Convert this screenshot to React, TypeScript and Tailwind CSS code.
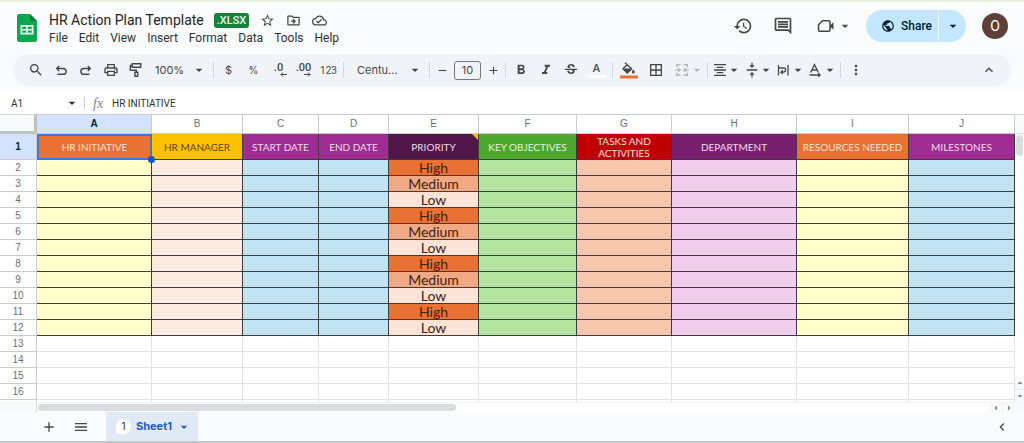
import { useState } from 'react'
import type { ReactNode } from 'react'
import {
  MdAdd,
  MdArrowDropDown,
  MdBorderAll,
  MdChevronLeft,
  MdExpandLess,
  MdFormatAlignCenter,
  MdFormatBold,
  MdFormatItalic,
  MdHistory,
  MdMenu,
  MdMoreVert,
  MdOutlineCloudDone,
  MdOutlineComment,
  MdOutlineDriveFileMove,
  MdOutlinePrint,
  MdPublic,
  MdRemove,
  MdSearch,
  MdStarBorder,
  MdStrikethroughS,
  MdVerticalAlignCenter
} from 'react-icons/md'

interface Column {
  letter: string
  width: string
  title: string
  head: string
  fill: string
}

const columns: Column[] = [
  { letter: 'A', width: 'w-[115px]', title: 'HR INITIATIVE', head: 'bg-[#e97132] text-[#fbe3d6]', fill: 'bg-[#ffffcc]' },
  { letter: 'B', width: 'w-[91px]', title: 'HR MANAGER', head: 'bg-[#ffc000] text-[#5c4708]', fill: 'bg-[#fbebe2]' },
  { letter: 'C', width: 'w-[76px]', title: 'START DATE', head: 'bg-[#a02b93] text-[#f3dcf0]', fill: 'bg-[#c0e4f4]' },
  { letter: 'D', width: 'w-[70px]', title: 'END DATE', head: 'bg-[#a02b93] text-[#f3dcf0]', fill: 'bg-[#c0e4f4]' },
  { letter: 'E', width: 'w-[90px]', title: 'PRIORITY', head: 'bg-[#501549] text-[#f3dcf0]', fill: '' },
  { letter: 'F', width: 'w-[98px]', title: 'KEY OBJECTIVES', head: 'bg-[#4ea72e] text-[#e3f5dc]', fill: 'bg-[#b3e5a1]' },
  { letter: 'G', width: 'w-[95px]', title: 'TASKS AND ACTIVITIES', head: 'bg-[#c00000] text-[#fbe0e0]', fill: 'bg-[#f6c6ad]' },
  { letter: 'H', width: 'w-[125px]', title: 'DEPARTMENT', head: 'bg-[#78206e] text-[#f3dcf0]', fill: 'bg-[#f1ceee]' },
  { letter: 'I', width: 'w-[112px]', title: 'RESOURCES NEEDED', head: 'bg-[#e97132] text-[#fbe3d6]', fill: 'bg-[#ffffcc]' },
  { letter: 'J', width: 'w-auto', title: 'MILESTONES', head: 'bg-[#a02b93] text-[#f3dcf0]', fill: 'bg-[#c0e4f4]' }
]

const priorities = ['High', 'Medium', 'Low', 'High', 'Medium', 'Low', 'High', 'Medium', 'Low', 'High', 'Low']

const priorityFill: Record<string, string> = {
  High: 'bg-[#e97132]',
  Medium: 'bg-[#f1a983]',
  Low: 'bg-[#fbe3d6]'
}

const emptyRows = [13, 14, 15, 16, 17]

const menus = ['File', 'Edit', 'View', 'Insert', 'Format', 'Data', 'Tools', 'Help']

function ToolButton({ label, wide, children }: { label: string; wide?: boolean; children: ReactNode }) {
  return (
    <button
      aria-label={label}
      className={`flex h-6 shrink-0 items-center justify-center rounded hover:bg-gray-200 ${wide ? 'w-[27px]' : 'w-[25px]'}`}
    >
      {children}
    </button>
  )
}

function DropButton({ label, disabled, children }: { label: string; disabled?: boolean; children: ReactNode }) {
  return (
    <button
      aria-label={label}
      disabled={disabled}
      className="flex h-6 w-8 shrink-0 items-center justify-between rounded pl-[2px] hover:bg-gray-200 disabled:w-9 disabled:pl-[6px] disabled:text-[#b4b8bc]"
    >
      {children}
      <MdArrowDropDown className="-ml-1 h-4 w-4 shrink-0" />
    </button>
  )
}

function Separator() {
  return <div className="mx-[2px] h-4 w-px shrink-0 bg-[#d3d7dc]" />
}

function SheetsLogo() {
  return (
    <svg viewBox="0 0 20 28" className="h-7 w-5 shrink-0">
      <path d="M2 0h11l7 7v19a2 2 0 0 1-2 2H2a2 2 0 0 1-2-2V2a2 2 0 0 1 2-2z" fill="#0aa84f" />
      <path d="M13 0l7 7h-5.500a1.500 1.500 0 0 1-1.500-1.500z" fill="#087a3b" />
      <path d="M3.500 11h13v9.500h-13zM5.200 12.700v2.200h3.900v-2.200zm5.700 0v2.200h3.900v-2.200zm-5.700 3.900v2.200h3.900v-2.200zm5.700 0v2.200h3.900v-2.200z" fill="#e6f7ec" fillRule="evenodd" />
    </svg>
  )
}

function MeetIcon() {
  return (
    <svg viewBox="0 0 18 16" className="h-4 w-[18px]">
      <path d="M5.500 2.700h6.300a1.200 1.200 0 0 1 1.200 1.200v8.200a1.200 1.200 0 0 1-1.200 1.200H2.700a1.200 1.200 0 0 1-1.200-1.200V6.700z" fill="none" stroke="currentColor" strokeWidth="1.500" strokeLinejoin="round" />
      <path d="M13.200 7.200l3.300-3v7.600l-3.300-3z" fill="currentColor" />
    </svg>
  )
}

function UndoIcon({ flip }: { flip?: boolean }) {
  return (
    <svg viewBox="0 0 14 14" className={flip ? 'h-[14px] w-[14px] -scale-x-100' : 'h-[14px] w-[14px]'} fill="none" stroke="currentColor" strokeWidth="1.400">
      <path d="M5.200 3L2.700 5.500 5.200 8M2.900 5.500h6.300a2.900 2.900 0 0 1 0 5.800H3.500" />
    </svg>
  )
}

function PaintRollerIcon() {
  return (
    <svg viewBox="0 0 14 16" className="h-4 w-[14px]" fill="none" stroke="currentColor" strokeWidth="1.400">
      <path d="M3.200 1.700h8.600v3.600H3.200zM3.200 3.500H1.300v4.800h6v2" />
      <path d="M5.900 10.300h2.800v4H5.900z" />
    </svg>
  )
}

function FillIcon() {
  return (
    <svg viewBox="0 0 18 17" className="h-[17px] w-[18px]">
      <path d="M5 .8l6.700 5.900-4.400 4.400L3 6.800l4.200-4.100" fill="none" stroke="currentColor" strokeWidth="1.400" strokeLinejoin="round" />
      <path d="M3 6.400h8.500l-4.200 4.700z" fill="currentColor" />
      <path d="M13.300 7.400s1.500 1.600 1.500 2.500a1.500 1.500 0 0 1-3 0c0-.9 1.500-2.500 1.500-2.500z" fill="currentColor" />
      <path d="M0 13.500h18v3H0z" fill="#e97132" />
    </svg>
  )
}

function MergeIcon() {
  return (
    <svg viewBox="0 0 14 14" className="h-[14px] w-[14px]" fill="none" stroke="currentColor" strokeWidth="1.400">
      <path d="M5.500 1.700H1.700v2.600M8.500 1.700h3.800v2.600M5.500 12.300H1.700V9.700M8.500 12.300h3.800V9.700M.5 7h4.200M13.500 7H9.300M3.300 5.200L5.100 7 3.300 8.800M10.700 5.200L8.900 7l1.800 1.800" />
    </svg>
  )
}

function WrapIcon() {
  return (
    <svg viewBox="0 0 14 14" className="h-[14px] w-[14px]" fill="none" stroke="currentColor" strokeWidth="1.300">
      <path d="M2.500 2v10.500M12 2v10.500M2.500 5h5a2.100 2.100 0 0 1 0 4.200H5M6.800 7.300L4.900 9.200l1.900 1.900" />
    </svg>
  )
}

function RotateIcon() {
  return (
    <svg viewBox="0 0 14 14" className="h-[14px] w-[14px]" fill="none" stroke="currentColor" strokeWidth="1.300">
      <path d="M2.700 9.500L6.500 1.500l3.800 8M4 7h5M1.500 12h10.500M10.300 10.200l1.800 1.800-1.800 1.800" />
    </svg>
  )
}

function DecimalIcon({ digits, increase }: { digits: string; increase?: boolean }) {
  return (
    <span className="flex flex-col items-end font-['Roboto',sans-serif] text-[11px] leading-[9px] font-medium">
      {digits}
      <svg viewBox="0 0 7 5" className={increase ? 'h-[5px] w-[7px] -scale-x-100' : '-mr-1 h-[5px] w-[7px]'} fill="none" stroke="currentColor">
        <path d="M7 2.500H1M3 .5l-2 2 2 2" />
      </svg>
    </span>
  )
}

function Header() {
  return (
    <header className="flex h-[52px] items-start pl-[17px] pr-4 font-['Google_Sans',Roboto,sans-serif]">
      <div className="pt-3">
        <SheetsLogo />
      </div>
      <div className="ml-3 pt-2">
        <div className="flex h-5 items-center text-[#444746]">
          <h1 className="text-[14px] leading-5 text-[#1f1f1f]">HR Action Plan Template</h1>
          <span className="ml-[10px] rounded-[3px] bg-[#188038] px-[3px] text-[11px] leading-[15px] font-medium text-[#e6f4ea]">.XLSX</span>
          <button aria-label="Star" className="ml-[11px]"><MdStarBorder className="h-[15px] w-[15px]" /></button>
          <button aria-label="Move" className="ml-[11px]"><MdOutlineDriveFileMove className="h-[15px] w-[15px]" /></button>
          <button aria-label="Document status" className="ml-[11px]"><MdOutlineCloudDone className="h-[15px] w-[15px]" /></button>
        </div>
        <nav className="flex gap-[11px] text-[12px] leading-4 text-[#303134]">
          {menus.map((menu) => (
            <button key={menu} className="hover:bg-gray-200">{menu}</button>
          ))}
        </nav>
      </div>
      <div className="ml-auto flex items-center pt-2 text-[#444746]">
        <button aria-label="Version history"><MdHistory className="h-5 w-5" /></button>
        <button aria-label="Comments" className="ml-5"><MdOutlineComment className="h-5 w-5" /></button>
        <button aria-label="Meet" className="ml-6 flex items-center">
          <MeetIcon />
          <MdArrowDropDown className="ml-[2px] h-4 w-4" />
        </button>
        <div className="ml-[13px] flex h-8 overflow-hidden rounded-full bg-[#c2e7ff] text-[#001d35]">
          <button className="flex w-[72px] items-center gap-[6px] pl-[15px] text-[12px] font-medium">
            <MdPublic className="h-[14px] w-[14px] shrink-0" />
            Share
          </button>
          <button aria-label="Share options" className="flex w-7 items-center justify-center border-l border-[#e8f5fe]">
            <MdArrowDropDown className="h-4 w-4" />
          </button>
        </div>
        <button aria-label="Account" className="ml-4 h-[26px] w-[26px] rounded-full bg-[#5d4037] text-[14px] text-white">O</button>
      </div>
    </header>
  )
}

function Toolbar() {
  const [fontSize, setFontSize] = useState('10')

  return (
    <div className="px-[13px] pb-[6px]">
      <div className="flex h-8 items-center rounded-full bg-[#f0f4f9] px-[10px] text-[#444746]">
        <ToolButton label="Search"><MdSearch className="h-4 w-4" /></ToolButton>
        <ToolButton label="Undo"><UndoIcon /></ToolButton>
        <ToolButton label="Redo"><UndoIcon flip /></ToolButton>
        <ToolButton label="Print"><MdOutlinePrint className="h-4 w-4" /></ToolButton>
        <ToolButton label="Paint format"><PaintRollerIcon /></ToolButton>
        <label className="relative flex w-[63px] shrink-0 items-center">
          <select aria-label="Zoom" className="w-full appearance-none pl-[7px] text-[11px]">
            <option>100%</option>
            <option>75%</option>
            <option>50%</option>
          </select>
          <MdArrowDropDown className="pointer-events-none absolute right-1 h-4 w-4" />
        </label>
        <Separator />
        <ToolButton label="Format as currency"><span className="text-[11px]">$</span></ToolButton>
        <ToolButton label="Format as percent"><span className="text-[10px]">%</span></ToolButton>
        <ToolButton label="Decrease decimal places"><DecimalIcon digits=".0" /></ToolButton>
        <ToolButton label="Increase decimal places"><DecimalIcon digits=".00" increase /></ToolButton>
        <ToolButton label="More formats"><span className="font-['Roboto',sans-serif] text-[10px]">123</span></ToolButton>
        <Separator />
        <label className="relative flex w-[81px] shrink-0 items-center">
          <select aria-label="Font" className="w-full appearance-none pl-[11px] text-[11px]">
            <option>Centu...</option>
            <option>Arial</option>
          </select>
          <MdArrowDropDown className="pointer-events-none absolute right-1 h-4 w-4" />
        </label>
        <Separator />
        <button aria-label="Decrease font size" className="flex w-5 shrink-0 justify-center"><MdRemove className="h-[13px] w-[13px]" /></button>
        <input
          aria-label="Font size"
          value={fontSize}
          onChange={(e) => setFontSize(e.target.value)}
          className="mx-[2px] h-[19px] w-[27px] shrink-0 rounded-[3px] border border-[#747775] text-center text-[11px]"
        />
        <button aria-label="Increase font size" className="flex w-5 shrink-0 justify-center"><MdAdd className="h-[13px] w-[13px]" /></button>
        <Separator />
        <ToolButton label="Bold"><MdFormatBold className="h-4 w-4" /></ToolButton>
        <ToolButton label="Italic"><MdFormatItalic className="h-4 w-4" /></ToolButton>
        <ToolButton label="Strikethrough"><MdStrikethroughS className="h-4 w-4" /></ToolButton>
        <ToolButton label="Text color" wide>
          <span className="w-[18px] border-b-[3px] border-white text-[11px] leading-[13px] font-medium">A</span>
        </ToolButton>
        <Separator />
        <ToolButton label="Fill color" wide><FillIcon /></ToolButton>
        <ToolButton label="Borders" wide><MdBorderAll className="h-4 w-4" /></ToolButton>
        <DropButton label="Merge cells" disabled><MergeIcon /></DropButton>
        <Separator />
        <DropButton label="Horizontal align"><MdFormatAlignCenter className="h-4 w-4" /></DropButton>
        <DropButton label="Vertical align"><MdVerticalAlignCenter className="h-4 w-4" /></DropButton>
        <DropButton label="Text wrapping"><WrapIcon /></DropButton>
        <DropButton label="Text rotation"><RotateIcon /></DropButton>
        <Separator />
        <ToolButton label="More"><MdMoreVert className="h-4 w-4" /></ToolButton>
        <button aria-label="Hide the menus" className="ml-auto flex w-[25px] justify-center"><MdExpandLess className="h-4 w-4" /></button>
      </div>
    </div>
  )
}

function FormulaBar() {
  const [formula, setFormula] = useState('HR INITIATIVE')

  return (
    <div className="flex h-[22px] items-center bg-white font-['Roboto',sans-serif] text-[#303134]">
      <input aria-label="Name box" defaultValue="A1" className="w-[53px] pl-[11px] text-[10px]" />
      <button aria-label="Named ranges" className="ml-[11px]"><MdArrowDropDown className="h-4 w-4" /></button>
      <div className="ml-1 h-3 w-px bg-[#c7cacd]" />
      <span className="ml-2 w-[19px] font-['Liberation_Serif',serif] text-[14px] text-[#80868b] italic">fx</span>
      <input
        aria-label="Formula"
        value={formula}
        onChange={(e) => setFormula(e.target.value)}
        className="flex-1 text-[10px]"
      />
    </div>
  )
}

function Grid() {
  return (
    <div className="flex min-h-0 flex-1 bg-white">
      <div className="min-w-0 flex-1 overflow-hidden">
        <table className="w-full table-fixed border-separate border-spacing-0 text-center">
          <colgroup>
            <col className="w-[37px]" />
            {columns.map((column) => (
              <col key={column.letter} className={column.width} />
            ))}
          </colgroup>
          <thead className="font-['Liberation_Sans',sans-serif] text-[10px] leading-3 text-[#6b6f73]">
            <tr className="h-5">
              <td className="border-t border-r-[3px] border-b-[3px] border-t-[#d9dadb] border-r-[#c0c0c0] border-b-[#c0c0c0] bg-[#f8f9fa] p-0" />
              {columns.map((column, i) => (
                <th
                  key={column.letter}
                  scope="col"
                  className={`border-t border-r border-b border-[#c9cbcd] p-0 ${i === 0 ? 'bg-[#d3e3fd] font-bold text-[#041e49]' : 'font-normal'}`}
                >
                  {column.letter}
                </th>
              ))}
            </tr>
          </thead>
          <tbody>
            <tr className="h-[26px]">
              <th scope="row" className="border-r border-b border-[#c9cbcd] bg-[#d3e3fd] p-0 font-['Liberation_Sans',sans-serif] text-[10px] font-bold text-[#041e49]">1</th>
              {columns.map((column, i) => (
                <td
                  key={column.letter}
                  className={`relative p-0 font-['Century_Gothic',Lato,sans-serif] text-[10px] leading-3 ${column.head} ${i === 0 ? 'border-2 border-[#3b78d8]' : 'border-r border-b border-[#3f3a40]'}`}
                >
                  {column.title}
                  {i === 4 && (
                    <svg viewBox="0 0 6 6" className="absolute top-0 right-0 h-[6px] w-[6px]">
                      <path d="M0 0h6v6z" fill="#fbbc04" />
                    </svg>
                  )}
                  {i === 0 && <span className="absolute -right-[5px] -bottom-[5px] z-10 h-[7px] w-[7px] rounded-full bg-[#0b57d0]" />}
                </td>
              ))}
            </tr>
            {priorities.map((priority, row) => (
              <tr key={row} className="h-4">
                <th scope="row" className="border-r border-b border-[#c9cbcd] p-0 font-['Liberation_Sans',sans-serif] text-[10px] leading-[15px] font-normal text-[#6b6f73]">
                  {row + 2}
                </th>
                {columns.map((column) => (
                  <td
                    key={column.letter}
                    className={`border-r border-b border-[#3d3d3d] p-0 font-['Century_Gothic',Lato,sans-serif] text-[14px] leading-[15px] text-[#3d2415] ${column.letter === 'E' ? priorityFill[priority] : column.fill}`}
                  >
                    {column.letter === 'E' ? priority : ''}
                  </td>
                ))}
              </tr>
            ))}
            {emptyRows.map((row) => (
              <tr key={row} className="h-4">
                <th scope="row" className="border-r border-b border-[#c9cbcd] p-0 font-['Liberation_Sans',sans-serif] text-[10px] leading-[15px] font-normal text-[#6b6f73]">
                  {row < 17 ? row : ''}
                </th>
                {columns.map((column) => (
                  <td key={column.letter} className="border-r border-b border-[#e1e1e1] p-0" />
                ))}
              </tr>
            ))}
          </tbody>
        </table>
      </div>
      {/* Vertical scrollbar */}
      <div className="flex w-[9px] flex-col border-t border-[#d9dadb]">
        <div className="h-[19px] border-b border-[#d9dadb] bg-[#f8f9fa]" />
        <div className="mx-px mt-px h-[21px] rounded-full bg-[#dadce0]" />
        <button aria-label="Scroll up" className="mt-auto flex h-[13px] items-center justify-center bg-[#f8f9fa] text-[#80868b]">
          <MdArrowDropDown className="h-3 w-3 shrink-0 rotate-180" />
        </button>
        <button aria-label="Scroll down" className="flex h-[13px] items-center justify-center border-t border-[#dfe6f3] bg-[#f8f9fa] text-[#80868b]">
          <MdArrowDropDown className="h-3 w-3 shrink-0" />
        </button>
      </div>
    </div>
  )
}

function HorizontalScrollbar() {
  return (
    <div className="flex h-[10px] items-center border-t border-[#f1f3f4] bg-white">
      <div className="h-full w-[37px] border-r border-[#d9dadb] bg-[#f8f9fa]" />
      <div className="flex-1 pl-px">
        <div className="h-[7px] w-[44%] rounded-full bg-[#dadce0]" />
      </div>
      <button aria-label="Scroll left" className="flex h-full w-[13px] items-center justify-center bg-[#f8f9fa] text-[#80868b]">
        <MdArrowDropDown className="h-3 w-3 shrink-0 rotate-90" />
      </button>
      <button aria-label="Scroll right" className="flex h-full w-[13px] items-center justify-center border-l border-[#eceff1] bg-[#f8f9fa] text-[#80868b]">
        <MdArrowDropDown className="h-3 w-3 shrink-0 -rotate-90" />
      </button>
      <div className="h-full w-[9px] bg-[#f8f9fa]" />
    </div>
  )
}

function SheetTabs() {
  return (
    <footer className="flex h-[31px] shrink-0 items-center border-b-2 border-[#c4c7c9] pl-[41px] pr-[14px] text-[#444746]">
      <button aria-label="Add sheet"><MdAdd className="h-4 w-4" /></button>
      <button aria-label="All sheets" className="ml-4"><MdMenu className="h-4 w-4" /></button>
      <button className="ml-[17px] flex h-full w-[92px] items-center bg-[#e1e9f7] pl-[10px] text-[11px] font-bold text-[#1a5bd0]">
        <span className="h-[15px] w-[15px] rounded-full rounded-bl-[3px] bg-white text-[10px] leading-[15px] font-normal text-[#303134]">1</span>
        <span className="ml-[5px]">Sheet1</span>
        <MdArrowDropDown className="ml-1 h-4 w-4" />
      </button>
      <button aria-label="Show side panel" className="ml-auto"><MdChevronLeft className="h-4 w-4" /></button>
    </footer>
  )
}

export default function App() {
  return (
    <div className="flex h-screen flex-col overflow-hidden border-t-2 border-[#ebefe0] bg-[#f9fbfd] font-['Google_Sans',Inter,Roboto,sans-serif]">
      <Header />
      <Toolbar />
      <FormulaBar />
      <Grid />
      <HorizontalScrollbar />
      <SheetTabs />
    </div>
  )
}
